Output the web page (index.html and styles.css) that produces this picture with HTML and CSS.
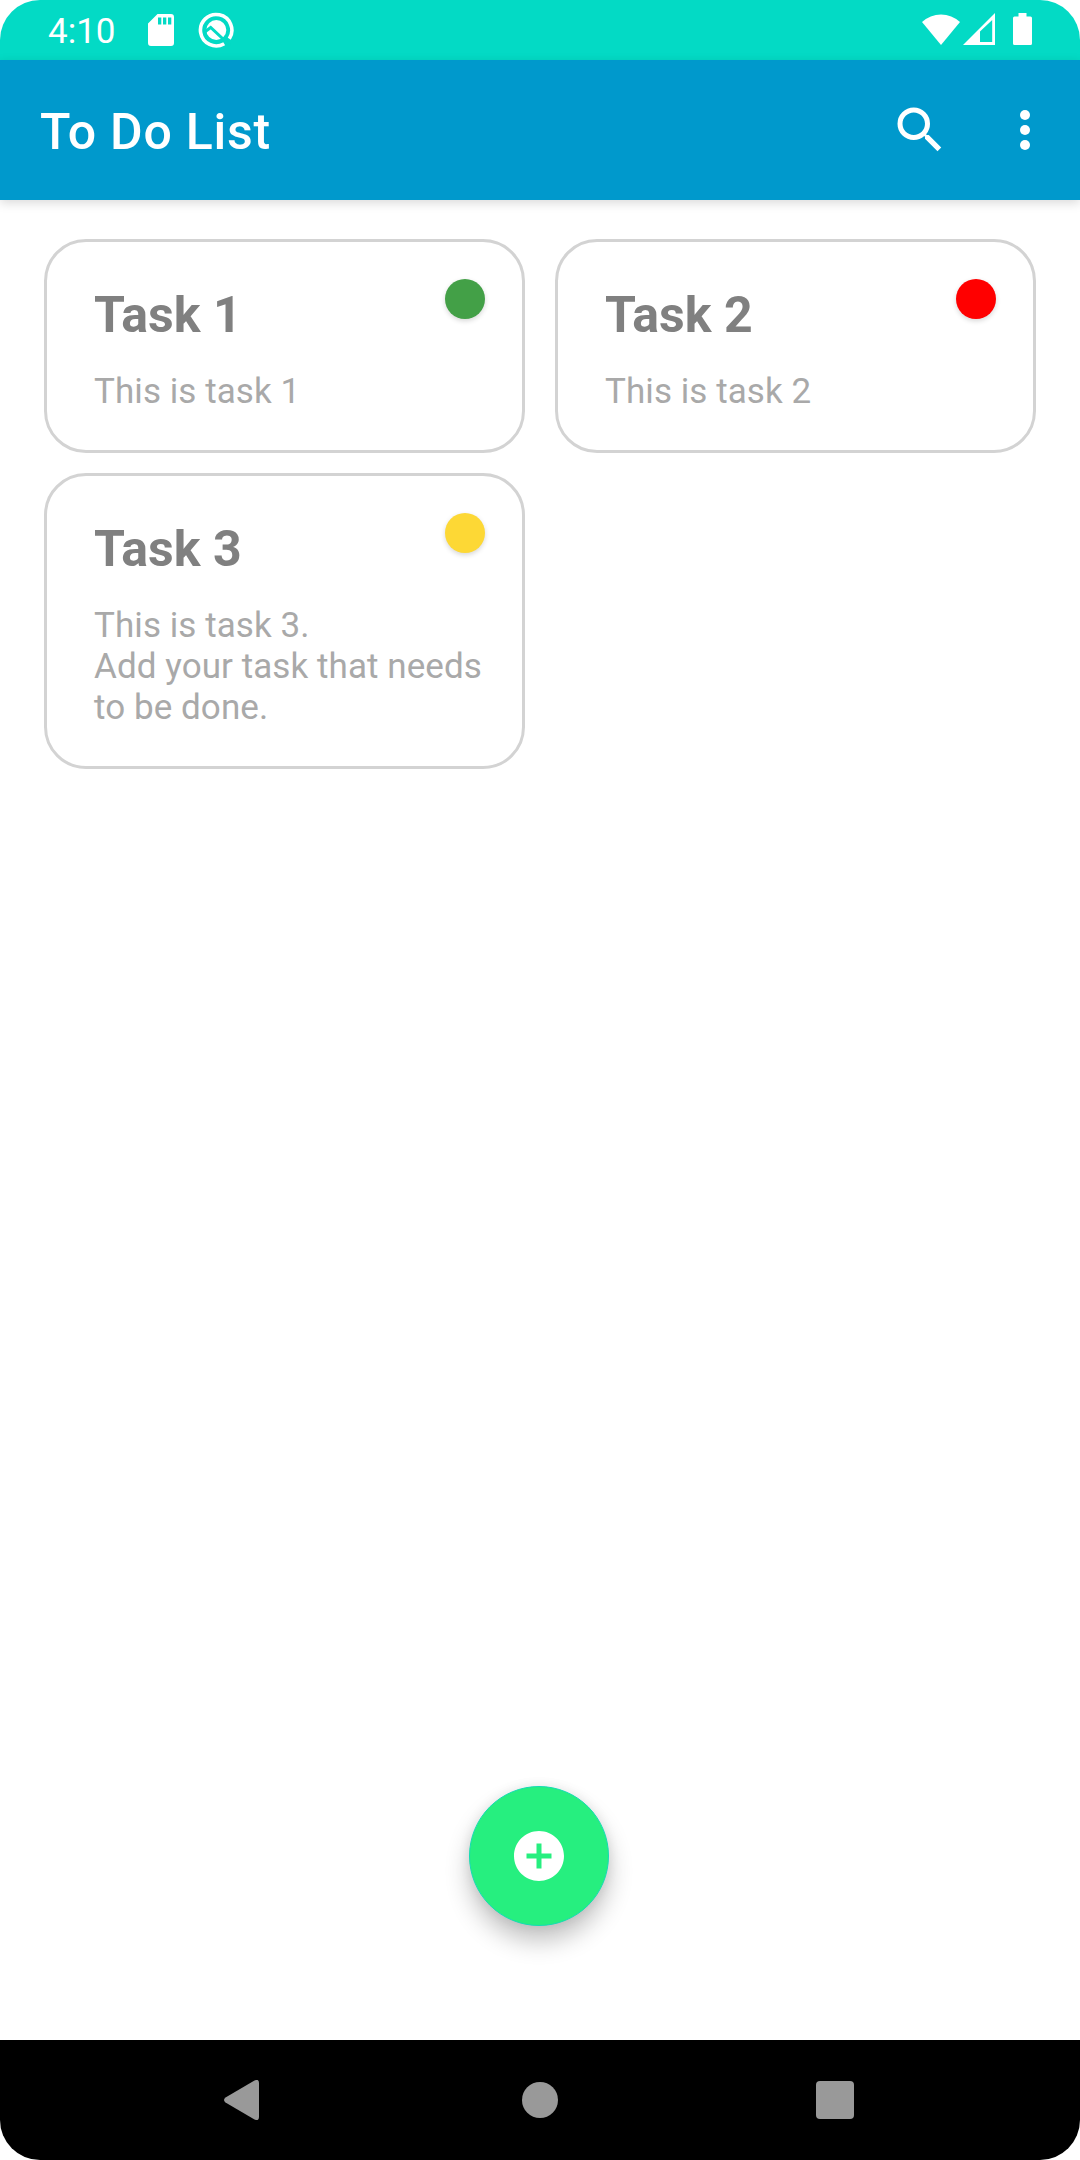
FILE: index.html
```
<!DOCTYPE html>
<html lang="en">
<head>
<meta charset="utf-8">
<title>To Do List</title>
<link rel="stylesheet" href="styles.css">
</head>
<body>
<div class="screen">
  <header class="status-bar">
    <span class="clock">4:10</span>
    <svg class="sd-icon" viewBox="0 0 26 32"><path fill="#fff" fill-rule="evenodd" d="M9.500 0H23a3 3 0 0 1 3 3v26a3 3 0 0 1-3 3H3a3 3 0 0 1-3-3V9.500ZM10 3.500v7h3.300v-7Zm5 0v7h3.300v-7Zm5 0v7h3.300v-7Z"/></svg>
    <svg class="debug-icon" viewBox="0 0 36 36">
      <path d="M26.200 31.700A15.700 15.700 0 1 1 31.300 26.800" fill="none" stroke="#fff" stroke-width="3.600"/>
      <circle cx="18.300" cy="18" r="10" fill="#fff"/>
      <path d="M6 20.500L12.700 15.500L32 33.500" fill="none" stroke="#03dac5" stroke-width="3"/>
    </svg>
    <span class="spacer"></span>
    <svg class="wifi-icon" viewBox="0 0 38 32"><path fill="#fff" d="M0 9A28 28 0 0 1 38 9L19 32Z"/></svg>
    <svg class="signal-icon" viewBox="0 0 32 32"><path fill="#fff" fill-rule="evenodd" d="M0 32L32 0V32ZM17 18.500V29H29.200V7Z"/></svg>
    <svg class="battery-icon" viewBox="0 0 19 32"><path fill="#fff" d="M5.500 0H13.500V3.500H17.500A1.500 1.500 0 0 1 19 5V30.500A1.500 1.500 0 0 1 17.500 32H1.500A1.500 1.500 0 0 1 0 30.500V5A1.500 1.500 0 0 1 1.500 3.500H5.500Z"/></svg>
  </header>
  <div class="app-bar">
    <h1 class="app-title">To Do List</h1>
    <svg class="search-icon" viewBox="0 0 24 24"><path fill="#fff" d="M15.500 14h-.79l-.28-.27A6.471 6.471 0 0 0 16 9.500 6.500 6.500 0 1 0 9.500 16c1.610 0 3.090-.59 4.230-1.570l.27.28v.79l5 4.990L20.490 19l-4.990-5zm-6 0C7.010 14 5 11.990 5 9.500S7.010 5 9.500 5 14 7.010 14 9.500 11.990 14 9.500 14z"/></svg>
    <svg class="more-icon" viewBox="0 0 10 40"><g fill="#fff"><circle cx="5" cy="5" r="5"/><circle cx="5" cy="20" r="5"/><circle cx="5" cy="35" r="5"/></g></svg>
  </div>
  <main class="board">
    <div class="tasks">
      <article class="card">
        <h2 class="card-title">Task 1</h2>
        <p class="card-text">This is task 1</p>
        <span class="dot dot-green"></span>
      </article>
      <article class="card">
        <h2 class="card-title">Task 2</h2>
        <p class="card-text">This is task 2</p>
        <span class="dot dot-red"></span>
      </article>
      <article class="card">
        <h2 class="card-title">Task 3</h2>
        <p class="card-text">This is task 3.<br>Add your task that needs to be done.</p>
        <span class="dot dot-yellow"></span>
      </article>
    </div>
    <button class="fab" aria-label="Add task">
      <svg class="add-icon" viewBox="0 0 24 24"><path fill="#fff" d="M12 2C6.480 2 2 6.480 2 12s4.480 10 10 10 10-4.480 10-10S17.520 2 12 2zm5 11h-4v4h-2v-4H7v-2h4V7h2v4h4v2z"/></svg>
    </button>
  </main>
  <nav class="nav-bar">
    <svg class="nav-back" viewBox="0 0 35 40"><path fill="#999" d="M1.500 17.500L30.500 .5Q35-1.500 35 3V37Q35 41.500 30.500 39.500L1.500 22.500Q-1.500 20 1.500 17.500Z"/></svg>
    <span class="nav-home"></span>
    <span class="nav-recent"></span>
  </nav>
</div>
</body>
</html>
```
FILE: styles.css
```
* { box-sizing: border-box; }
body { margin: 0; background: #fff; font-family: Roboto, sans-serif; }
h1, h2, p { margin: 0; }
svg { display: block; flex: none; }

.screen {
  width: 1080px;
  height: 2160px;
  display: flex;
  flex-direction: column;
  overflow: hidden;
  border-radius: 40px;
  background: #fff;
}

.status-bar {
  height: 60px;
  flex: none;
  display: flex;
  align-items: flex-start;
  padding: 0 48px;
  background: #03dac5;
  color: #fff;
}
.clock { width: 100px; margin-top: 11px; font-size: 35px; line-height: 41px; }
.sd-icon { width: 26px; height: 32px; margin-top: 14px; }
.debug-icon { width: 36px; height: 36px; margin: 12px 0 0 24px; }
.spacer { flex: 1; }
.wifi-icon { width: 38px; height: 32px; margin-top: 13px; }
.signal-icon { width: 32px; height: 32px; margin: 13px 18px 0 3px; }
.battery-icon { width: 19px; height: 32px; margin-top: 13px; }

.app-bar {
  height: 140px;
  flex: none;
  display: flex;
  align-items: center;
  padding: 0 50px 0 40px;
  background: #0099cc;
  box-shadow: 0 3px 10px rgba(0, 0, 0, .15);
}
.app-title { flex: 1; color: #fff; font-size: 50px; line-height: 60px; font-weight: 500; letter-spacing: .75px; padding-top: 3px; }
.search-icon { width: 60px; height: 60px; margin-right: 70px; }
.more-icon { width: 10px; height: 40px; }

.board {
  flex: 1;
  display: flex;
  flex-direction: column;
  align-items: center;
  justify-content: space-between;
  padding: 39px 44px 114px;
}
.tasks {
  width: 100%;
  display: grid;
  grid-template-columns: 1fr 1fr;
  gap: 20px 30px;
}
.card {
  position: relative;
  padding: 43px 36px 38px 47px;
  border: 3px solid #d3d3d3;
  border-radius: 42px;
}
.card-title { color: #808080; font-size: 50px; line-height: 60px; font-weight: 700; }
.card-text { margin-top: 26px; color: #a9a9a9; font-size: 35px; line-height: 41px; letter-spacing: .07px; }
.dot {
  position: absolute;
  top: 37px;
  right: 37px;
  width: 40px;
  height: 40px;
  border-radius: 50%;
  box-shadow: 0 2px 5px rgba(0, 0, 0, .16);
}
.dot-green { background: #43a047; }
.dot-red { background: #f00; }
.dot-yellow { background: #fdd835; }

.fab {
  width: 140px;
  height: 140px;
  display: flex;
  align-items: center;
  justify-content: center;
  margin: 0 2px 0 0;
  padding: 0;
  border: 1px solid #14dcb4;
  border-radius: 50%;
  background: #26ef7f;
  box-shadow: 0 15px 24px rgba(0, 0, 0, .24), 0 0 12px rgba(0, 0, 0, .08);
}
.add-icon { width: 60px; height: 60px; }

.nav-bar {
  height: 120px;
  flex: none;
  display: flex;
  align-items: center;
  padding-left: 224px;
  background: #000;
}
.nav-back { width: 35px; height: 40px; }
.nav-home { width: 36px; height: 36px; margin: 0 258px 0 263px; border-radius: 50%; background: #999; }
.nav-recent { width: 38px; height: 38px; border-radius: 4px; background: #999; }
```
